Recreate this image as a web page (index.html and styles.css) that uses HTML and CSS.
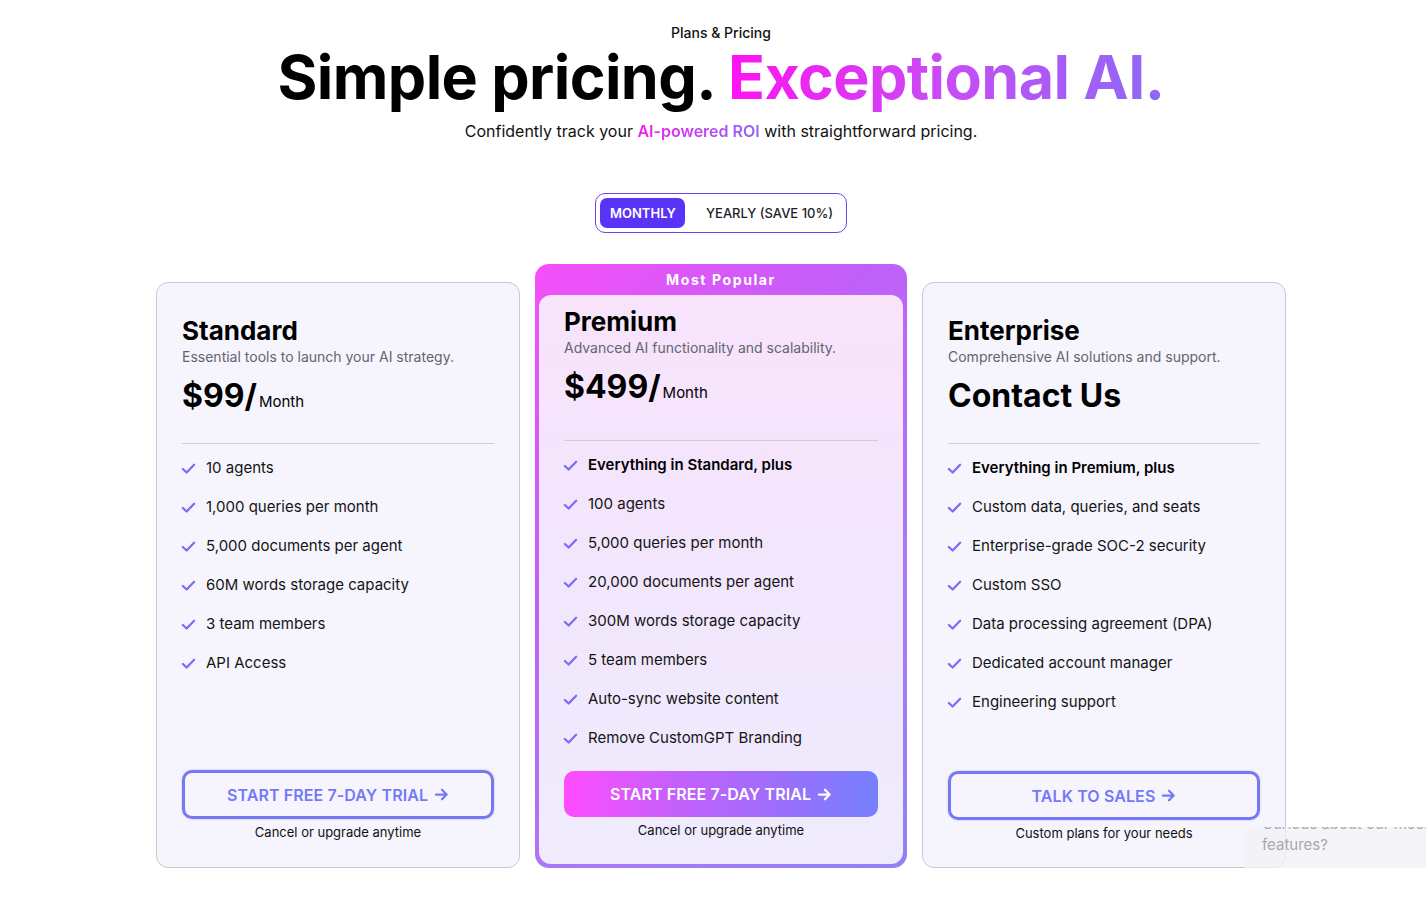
FILE: index.html
```html
<!DOCTYPE html>
<html lang="en">
<head>
<meta charset="utf-8">
<title>Plans & Pricing</title>
<link rel="stylesheet" href="styles.css">
</head>
<body>
<main class="page">
  <header class="hero">
    <p class="eyebrow">Plans &amp; Pricing</p>
    <h1 class="title">Simple pricing. <span class="grad">Exceptional AI.</span></h1>
    <p class="subtitle">Confidently track your <span class="grad-sm">AI-powered ROI</span> with straightforward pricing.</p>
  </header>

  <div class="toggle-wrap">
    <div class="toggle">
      <button class="toggle-btn active">MONTHLY</button>
      <button class="toggle-btn">YEARLY (SAVE 10%)</button>
    </div>
  </div>

  <section class="plans">
    <article class="card">
      <div class="card-head">
        <h2 class="plan-name">Standard</h2>
        <p class="plan-desc">Essential tools to launch your AI strategy.</p>
        <p class="price"><span class="amount">$99/</span><span class="per">Month</span></p>
      </div>
      <hr class="divider">
      <ul class="features">
        <li><svg class="check" viewBox="0 0 16 16"><path d="M2 8.5l4 3.8L14 4"/></svg>10 agents</li>
        <li><svg class="check" viewBox="0 0 16 16"><path d="M2 8.5l4 3.8L14 4"/></svg>1,000 queries per month</li>
        <li><svg class="check" viewBox="0 0 16 16"><path d="M2 8.5l4 3.8L14 4"/></svg>5,000 documents per agent</li>
        <li><svg class="check" viewBox="0 0 16 16"><path d="M2 8.5l4 3.8L14 4"/></svg>60M words storage capacity</li>
        <li><svg class="check" viewBox="0 0 16 16"><path d="M2 8.5l4 3.8L14 4"/></svg>3 team members</li>
        <li><svg class="check" viewBox="0 0 16 16"><path d="M2 8.5l4 3.8L14 4"/></svg>API Access</li>
      </ul>
      <div class="card-foot">
        <a class="btn btn-outline" href="#">START FREE 7-DAY TRIAL <svg class="arrow" viewBox="0 0 16 16"><path d="M2 8h11M8.5 3l5 5-5 5"/></svg></a>
        <p class="note">Cancel or upgrade anytime</p>
      </div>
    </article>

    <article class="card-featured">
      <div class="badge">Most Popular</div>
      <div class="card-inner">
        <div class="card-head">
          <h2 class="plan-name">Premium</h2>
          <p class="plan-desc">Advanced AI functionality and scalability.</p>
          <p class="price"><span class="amount">$499/</span><span class="per">Month</span></p>
        </div>
        <hr class="divider divider-featured">
        <ul class="features">
          <li class="strong"><svg class="check" viewBox="0 0 16 16"><path d="M2 8.5l4 3.8L14 4"/></svg>Everything in Standard, plus</li>
          <li><svg class="check" viewBox="0 0 16 16"><path d="M2 8.5l4 3.8L14 4"/></svg>100 agents</li>
          <li><svg class="check" viewBox="0 0 16 16"><path d="M2 8.5l4 3.8L14 4"/></svg>5,000 queries per month</li>
          <li><svg class="check" viewBox="0 0 16 16"><path d="M2 8.5l4 3.8L14 4"/></svg>20,000 documents per agent</li>
          <li><svg class="check" viewBox="0 0 16 16"><path d="M2 8.5l4 3.8L14 4"/></svg>300M words storage capacity</li>
          <li><svg class="check" viewBox="0 0 16 16"><path d="M2 8.5l4 3.8L14 4"/></svg>5 team members</li>
          <li><svg class="check" viewBox="0 0 16 16"><path d="M2 8.5l4 3.8L14 4"/></svg>Auto-sync website content</li>
          <li><svg class="check" viewBox="0 0 16 16"><path d="M2 8.5l4 3.8L14 4"/></svg>Remove CustomGPT Branding</li>
        </ul>
        <div class="card-foot card-foot-featured">
          <a class="btn btn-fill" href="#">START FREE 7-DAY TRIAL <svg class="arrow" viewBox="0 0 16 16"><path d="M2 8h11M8.5 3l5 5-5 5"/></svg></a>
          <p class="note">Cancel or upgrade anytime</p>
        </div>
      </div>
    </article>

    <article class="card card-ent">
      <div class="card-head">
        <h2 class="plan-name">Enterprise</h2>
        <p class="plan-desc">Comprehensive AI solutions and support.</p>
        <p class="price"><span class="amount">Contact Us</span></p>
      </div>
      <hr class="divider">
      <ul class="features">
        <li class="strong"><svg class="check" viewBox="0 0 16 16"><path d="M2 8.5l4 3.8L14 4"/></svg>Everything in Premium, plus</li>
        <li><svg class="check" viewBox="0 0 16 16"><path d="M2 8.5l4 3.8L14 4"/></svg>Custom data, queries, and seats</li>
        <li><svg class="check" viewBox="0 0 16 16"><path d="M2 8.5l4 3.8L14 4"/></svg>Enterprise-grade SOC-2 security</li>
        <li><svg class="check" viewBox="0 0 16 16"><path d="M2 8.5l4 3.8L14 4"/></svg>Custom SSO</li>
        <li><svg class="check" viewBox="0 0 16 16"><path d="M2 8.5l4 3.8L14 4"/></svg>Data processing agreement (DPA)</li>
        <li><svg class="check" viewBox="0 0 16 16"><path d="M2 8.5l4 3.8L14 4"/></svg>Dedicated account manager</li>
        <li><svg class="check" viewBox="0 0 16 16"><path d="M2 8.5l4 3.8L14 4"/></svg>Engineering support</li>
      </ul>
      <div class="card-foot">
        <a class="btn btn-outline" href="#">TALK TO SALES <svg class="arrow" viewBox="0 0 16 16"><path d="M2 8h11M8.5 3l5 5-5 5"/></svg></a>
        <p class="note">Custom plans for your needs</p>
      </div>
    </article>
  </section>
</main>

<aside class="chat-teaser">
  <p class="chat-text">Curious about our most<br>features?</p>
</aside>
</body>
</html>
```

FILE: styles.css
```css
* { box-sizing: border-box; }

html, body {
  margin: 0;
  padding: 0;
  background: #ffffff;
}

body {
  font-family: "Inter", "Noto Sans", "Liberation Sans", sans-serif;
  color: #111111;
  position: relative;
  min-height: 900px;
  overflow: hidden;
}

.page {
  padding: 23px 0 0 16px;
  display: flex;
  flex-direction: column;
  align-items: center;
}

.hero {
  text-align: center;
}

.eyebrow {
  margin: 0;
  font-size: 14px;
  line-height: 20px;
  font-weight: 500;
  color: #111;
}

.title {
  margin: 0;
  font-size: 61px;
  line-height: 68px;
  font-weight: 700;
  letter-spacing: -0.6px;
  color: #000;
}

.grad {
  background: linear-gradient(90deg, #ff12f2 0%, #c84cf5 50%, #8b6af7 100%);
  -webkit-background-clip: text;
  background-clip: text;
  color: transparent;
}

.subtitle {
  margin: 9px 0 0;
  font-size: 16px;
  line-height: 22px;
  color: #111;
}

.grad-sm {
  font-weight: 600;
  background: linear-gradient(90deg, #f51cf0 0%, #8a66f6 100%);
  -webkit-background-clip: text;
  background-clip: text;
  color: transparent;
}

.toggle-wrap {
  margin-top: 51px;
}

.toggle {
  display: flex;
  align-items: center;
  padding: 4px;
  border: 1px solid #6a44f5;
  border-radius: 10px;
  background: #fff;
  width: 252px;
  height: 40px;
}

.toggle-btn {
  font-family: inherit;
  font-size: 13px;
  font-weight: 500;
  border: 0;
  background: transparent;
  color: #1d1d2b;
  height: 30px;
  padding: 0 14px 0 21px;
  border-radius: 7px;
  cursor: pointer;
  white-space: nowrap;
}

.toggle-btn.active {
  background: #5a34f6;
  color: #fff;
  font-weight: 600;
  padding: 0 10px;
  width: 85px;
}

.plans {
  margin-top: 31px;
  display: grid;
  grid-template-columns: 364px 372px 364px;
  gap: 15px;
  align-items: stretch;
}

.card {
  margin-top: 18px;
  background: #f6f5fe;
  border: 1px solid #c9c9cf;
  border-radius: 12px;
  padding: 32px 25px 26px;
  display: flex;
  flex-direction: column;
}

.card-ent {
  padding-bottom: 25px;
}

.card-featured {
  border-radius: 14px;
  background: linear-gradient(135deg, #f54ff8 0%, #c060f8 35%, #a77af8 70%, #9082f8 100%);
  padding: 0 4px 4px;
  display: flex;
  flex-direction: column;
}

.badge {
  height: 31px;
  display: flex;
  align-items: center;
  justify-content: center;
  color: #fff;
  font-size: 14px;
  font-weight: 700;
  letter-spacing: 1.6px;
}

.card-inner {
  flex: 1;
  border-radius: 12px;
  background: linear-gradient(180deg, #f8e3fb 0%, #f2e6fc 45%, #efebfd 100%);
  padding: 11px 25px 25px;
  display: flex;
  flex-direction: column;
}

.plan-name {
  margin: 0;
  font-size: 26px;
  line-height: 32px;
  font-weight: 700;
  color: #000;
}

.plan-desc {
  margin: 0;
  font-size: 14px;
  line-height: 20px;
  color: #62646f;
}

.price {
  margin: 9px 0 0;
  height: 40px;
  line-height: 40px;
  display: flex;
  align-items: baseline;
}

.amount {
  font-size: 32px;
  font-weight: 700;
  color: #000;
}

.per {
  font-size: 15px;
  font-weight: 400;
  color: #000;
  margin-left: 2px;
}

.divider {
  border: 0;
  border-top: 1px solid #cfcfd4;
  margin: 27px 0 0;
}

.divider-featured {
  margin-top: 33px;
}

.features {
  list-style: none;
  margin: 12px 0 0;
  padding: 0;
  display: flex;
  flex-direction: column;
  gap: 15px;
  flex: 1;
}

.features li {
  display: flex;
  align-items: center;
  gap: 10px;
  font-size: 15px;
  line-height: 24px;
  color: #141414;
}

.features li.strong {
  font-weight: 600;
  color: #000;
}

.check {
  width: 15px;
  height: 15px;
  flex: none;
  fill: none;
  stroke: #7b6cf5;
  stroke-width: 2.4;
  stroke-linecap: round;
  stroke-linejoin: round;
  margin-left: -1px;
}

.card-foot {
  margin-top: 22px;
  display: flex;
  flex-direction: column;
  align-items: center;
}

.card-foot-featured {
  margin-top: 21px;
}

.btn {
  width: 100%;
  display: flex;
  align-items: center;
  justify-content: center;
  gap: 6px;
  text-decoration: none;
  font-size: 16px;
  font-weight: 600;
  letter-spacing: 0.1px;
  border-radius: 10px;
}

.btn-outline {
  height: 49px;
  border: 3px solid #7478f6;
  color: #7479f6;
  background: transparent;
  box-shadow: 0 0 2px rgba(60, 60, 90, 0.35);
}

.btn-fill {
  height: 46px;
  color: #fff;
  background: linear-gradient(90deg, #ff4cfe 0%, #c560fb 35%, #9a6ffc 70%, #7580ff 100%);
}

.arrow {
  width: 15px;
  height: 15px;
  fill: none;
  stroke: currentColor;
  stroke-width: 2.4;
  stroke-linecap: round;
  stroke-linejoin: round;
}

.note {
  margin: 4px 0 0;
  font-size: 13px;
  line-height: 18px;
  color: #111;
}

.chat-teaser {
  position: absolute;
  left: 1244px;
  top: 827px;
  width: 200px;
  height: 41px;
  overflow: hidden;
  background: rgba(242, 242, 244, 0.75);
  border-radius: 14px 0 0 0;
}

.chat-text {
  margin: -14px 0 0 18px;
  font-size: 15px;
  line-height: 21px;
  color: #a8a8ad;
  white-space: nowrap;
}
```
